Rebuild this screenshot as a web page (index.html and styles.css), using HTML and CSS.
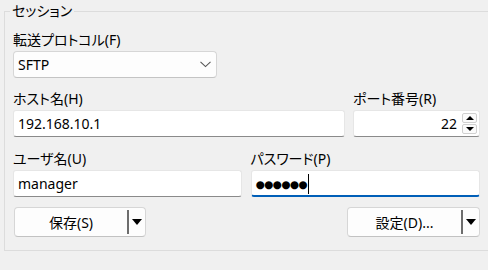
FILE: index.html
```html
<!DOCTYPE html>
<html>
	<head>
		<meta charset="UTF-8">
		<title>セッション</title>
		<link rel="stylesheet" href="styles.css">
	</head>

	<body>
		<fieldset class="session">
			<legend>セッション</legend>

			<div class="field">
				<label>転送プロトコル(F)</label>
				<div class="combo">
					<span>SFTP</span>
					<svg width="11" height="7" viewBox="0 0 11 7"><path d="M0.5 0.8 L5.5 5.6 L10.5 0.8" fill="none" stroke="#555" stroke-width="1.1"/></svg>
				</div>
			</div>

			<div class="row host-row">
				<div class="field">
					<label>ホスト名(H)</label>
					<div class="edit">192.168.10.1</div>
				</div>
				<div class="field">
					<label>ポート番号(R)</label>
					<div class="edit spin">
						<span class="num">22</span>
						<div class="spin-btns">
							<div class="spin-btn"><span class="tri up"></span></div>
							<div class="spin-btn"><span class="tri down"></span></div>
						</div>
					</div>
				</div>
			</div>

			<div class="row user-row">
				<div class="field">
					<label>ユーザ名(U)</label>
					<div class="edit">manager</div>
				</div>
				<div class="field">
					<label>パスワード(P)</label>
					<div class="edit focused"><span class="dots">●●●●●●</span><span class="caret"></span></div>
				</div>
			</div>

			<div class="buttons">
				<div class="split save">
					<span class="caption">保存(S)</span>
					<span class="sep"></span>
					<span class="tri drop"></span>
				</div>
				<div class="split setup">
					<span class="caption">設定(D)...</span>
					<span class="sep"></span>
					<span class="tri drop"></span>
				</div>
			</div>
		</fieldset>
	</body>
</html>
```

FILE: styles.css
```css
body {
	margin: 0;
	background: #f0f0f0;
	font-family: "Noto Sans", "Noto Sans CJK JP", sans-serif;
	font-size: 14px;
	font-feature-settings: "palt";
	color: #000;
	overflow: hidden;
}

.session {
	margin: 1px 0 0 4px;
	padding: 9px 8px 13px 8px;
	border: 1px solid #dcdcdc;
	border-right: none;
	min-width: 0;
}

.session legend {
	margin-left: -3px;
	padding: 0 2px;
	line-height: 20px;
}

.field label {
	display: block;
	height: 20px;
	line-height: 20px;
	margin-bottom: 1px;
}

.combo {
	width: 204px;
	height: 27px;
	box-sizing: border-box;
	border: 1px solid #d6d6d6;
	border-bottom-color: #c4c4c4;
	border-radius: 4px;
	background: #fdfdfd;
	display: flex;
	align-items: center;
	justify-content: space-between;
	padding: 0 5px 0 4px;
}

.row {
	display: flex;
}

.host-row {
	margin-top: 11px;
	gap: 8px;
}

.host-row .field:first-child {
	width: 332px;
}

.host-row .field:last-child {
	width: 127px;
}

.user-row {
	margin-top: 12px;
	gap: 9px;
}

.user-row .field {
	width: 229px;
}

.user-row .field:last-child {
	width: 230px;
}

.edit {
	height: 27px;
	box-sizing: border-box;
	border: 1px solid #e6e6e6;
	border-bottom-color: #8a8a8a;
	border-radius: 3px;
	background: #fff;
	padding: 0 4px;
	display: flex;
	align-items: center;
}

.spin {
	padding-right: 2px;
}

.spin .num {
	flex: 1;
	text-align: right;
	padding-right: 5px;
}

.spin-btns {
	display: flex;
	flex-direction: column;
	gap: 1px;
}

.spin-btn {
	width: 15px;
	height: 10px;
	box-sizing: border-box;
	border: 1px solid #d0d0d0;
	border-radius: 2px;
	background: #fbfbfb;
	display: flex;
	align-items: center;
	justify-content: center;
}

.tri {
	width: 0;
	height: 0;
	border-left: 4px solid transparent;
	border-right: 4px solid transparent;
}

.tri.up {
	border-bottom: 4px solid #000;
}

.tri.down {
	border-top: 4px solid #000;
}

.focused {
	border-bottom: 2px solid #005fb8;
	padding-top: 1px;
}

.dots {
	font-family: "DejaVu Sans", sans-serif;
	font-size: 10.5px;
	letter-spacing: -0.6px;
}

.caret {
	width: 1px;
	height: 20px;
	background: #000;
	margin-left: 1px;
}

.buttons {
	margin-top: 10px;
	display: flex;
	justify-content: space-between;
	padding-left: 1px;
}

.split {
	height: 30px;
	box-sizing: border-box;
	border: 1px solid #d6d6d6;
	border-bottom-color: #c2c2c2;
	border-radius: 4px;
	background: #fdfdfd;
	display: flex;
	align-items: center;
}

.save {
	width: 132px;
}

.setup {
	width: 133px;
}

.split .caption {
	flex: 1;
	text-align: center;
}

.split .sep {
	width: 2px;
	height: 24px;
	background: #6d6d6d;
}

.tri.drop {
	border-left-width: 5.5px;
	border-right-width: 5.5px;
	border-top: 6px solid #000;
	margin: 0 3px 0 3px;
}
```
